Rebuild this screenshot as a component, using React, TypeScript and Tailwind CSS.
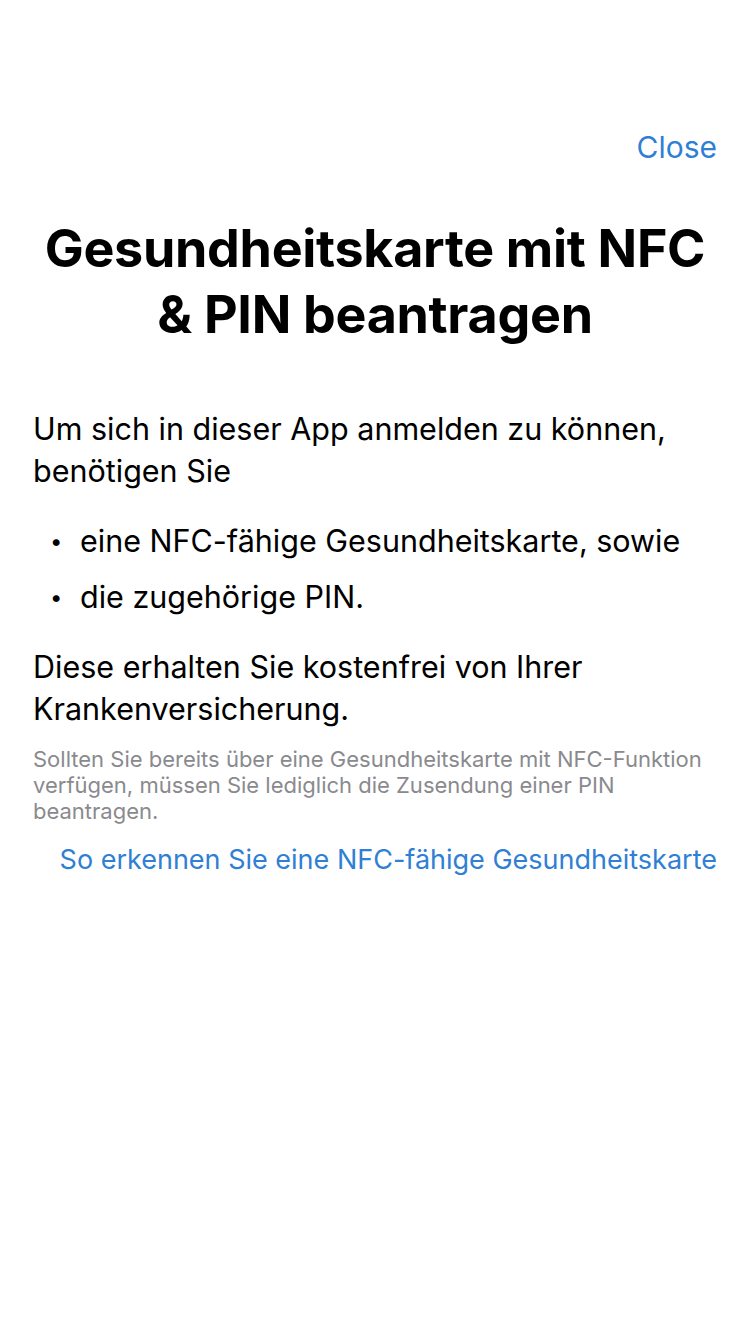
export default function App() {
  return (
    <div className="min-h-[1334px] w-[750px] bg-white font-['Inter',sans-serif] text-black">
      <div className="flex justify-end px-[33px] pt-[127px]">
        <button className="text-[30px] leading-[40px] text-[#2f7fd4]">Close</button>
      </div>

      <h1 className="mt-[49px] px-[33px] text-center text-[52px] font-bold leading-[66px] tracking-[-0.3px]">
        Gesundheitskarte mit NFC &amp; PIN beantragen
      </h1>

      <div className="mt-[60px] px-[33px]">
        <p className="text-[30.5px] leading-[42px]">
          Um sich in dieser App anmelden zu können, benötigen Sie
        </p>

        <ul className="mt-[28px] flex flex-col gap-[14px]">
          <li className="flex items-center text-[30.5px] leading-[42px]">
            <span className="w-[47px] pl-[17px] text-[22px]">•</span>
            <span>eine NFC-fähige Gesundheitskarte, sowie</span>
          </li>
          <li className="flex items-center text-[30.5px] leading-[42px]">
            <span className="w-[47px] pl-[17px] text-[22px]">•</span>
            <span>die zugehörige PIN.</span>
          </li>
        </ul>

        <p className="mt-[28px] text-[30.5px] leading-[42px]">
          Diese erhalten Sie kostenfrei von Ihrer Krankenversicherung.
        </p>

        <p className="mt-[16px] text-[22px] leading-[26px] text-[#8a8a8e]">
          Sollten Sie bereits über eine Gesundheitskarte mit NFC-Funktion verfügen, müssen Sie lediglich die Zusendung einer PIN beantragen.
        </p>

        <div className="mt-[18px] flex justify-end">
          <a className="text-[27px] leading-[36px] text-[#2f7fd4]">So erkennen Sie eine NFC-fähige Gesundheitskarte</a>
        </div>
      </div>
    </div>
  );
}
